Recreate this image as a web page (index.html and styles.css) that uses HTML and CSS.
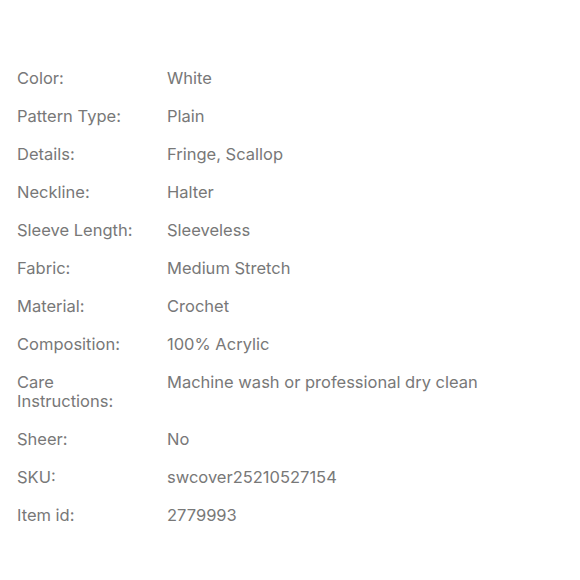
FILE: index.html
```html
<!DOCTYPE html>
<html>
<head>
<meta charset="utf-8">
<link rel="stylesheet" href="styles.css">
</head>
<body>
<div class="specs">
  <div class="row"><div class="label">Color:</div><div class="value">White</div></div>
  <div class="row"><div class="label">Pattern Type:</div><div class="value">Plain</div></div>
  <div class="row"><div class="label">Details:</div><div class="value">Fringe, Scallop</div></div>
  <div class="row"><div class="label">Neckline:</div><div class="value">Halter</div></div>
  <div class="row"><div class="label">Sleeve Length:</div><div class="value">Sleeveless</div></div>
  <div class="row"><div class="label">Fabric:</div><div class="value">Medium Stretch</div></div>
  <div class="row"><div class="label">Material:</div><div class="value">Crochet</div></div>
  <div class="row"><div class="label">Composition:</div><div class="value">100% Acrylic</div></div>
  <div class="row"><div class="label">Care Instructions:</div><div class="value">Machine wash or professional dry clean</div></div>
  <div class="row"><div class="label">Sheer:</div><div class="value">No</div></div>
  <div class="row"><div class="label">SKU:</div><div class="value">swcover25210527154</div></div>
  <div class="row"><div class="label">Item id:</div><div class="value">2779993</div></div>
</div>
</body>
</html>
```
FILE: styles.css
```css
html, body {
  margin: 0;
  padding: 0;
  background: #fff;
}
body {
  font-family: Inter, "Noto Sans", sans-serif;
  font-size: 16.5px;
  line-height: 19px;
  color: #787878;
}
.specs {
  padding: 69px 17px 0 17px;
  display: flex;
  flex-direction: column;
  gap: 19px;
}
.row {
  display: grid;
  grid-template-columns: 150px 1fr;
}
.label {
  width: 130px;
}
```
